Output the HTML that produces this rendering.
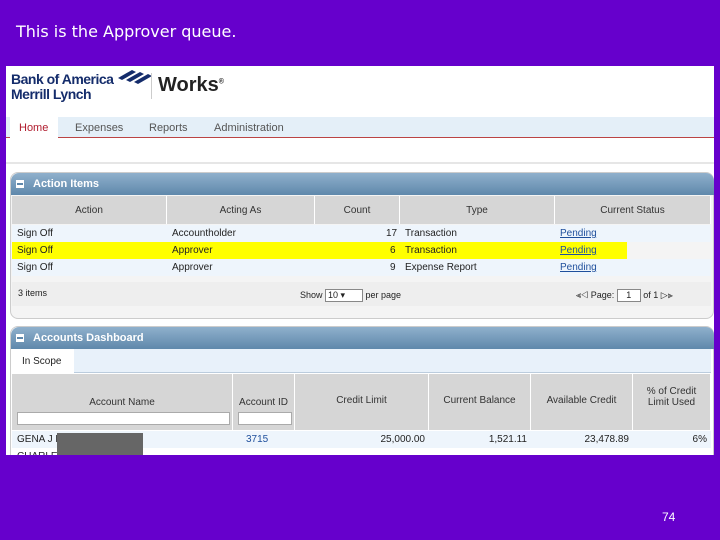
<!DOCTYPE html><html><head><style>
*{margin:0;padding:0;box-sizing:border-box}
body{width:720px;height:540px;background:#6600cc;position:relative;overflow:hidden;font-family:"Liberation Sans",sans-serif}
.a{position:absolute}
.t{font-size:11px;color:#222}
.hd{background:linear-gradient(#8fb0cc,#5f88ab);color:#fff;font-size:11px;font-weight:bold;border-radius:8px 8px 0 0}
.hc{background:#d6d6d6;border-right:1px solid #fff;font-size:10px;color:#333;display:flex;align-items:center;justify-content:center;text-align:center;position:absolute}
.lnk{color:#1f4f9c;text-decoration:underline}
</style></head><body>
<div class="a" style="left:16px;top:22px;color:#fff;font-size:16px;font-family:'DejaVu Sans',sans-serif">This is the Approver queue.</div>
<div class="a" style="left:6px;top:66px;width:708px;height:389px;background:#fff;overflow:hidden">
 <div class="a" style="left:5px;top:6px;font-weight:bold;font-size:14px;color:#142c6b;line-height:15px;letter-spacing:-.5px">Bank of America<br>Merrill Lynch</div>
 <svg class="a" style="left:106px;top:2px" width="42" height="18"><g fill="#142c6b"><path d="M6 10 L20 2 L24 4 L10 12Z"/><path d="M14 12 L28 4 L32 6 L18 14Z"/><path d="M22 14 L36 6 L40 8 L26 16Z"/></g></svg>
 <div class="a" style="left:145px;top:7px;width:1px;height:26px;background:#ccc"></div>
 <div class="a" style="left:152px;top:8px;font-size:20px;font-weight:bold;color:#222">Works<sup style="font-size:7px">®</sup></div>
 <div class="a" style="left:0;top:51px;width:708px;height:21px;background:#e4eff8;border-bottom:1px solid #b44"></div>
 <div class="a t" style="left:4px;top:51px;width:48px;height:21px;background:#fff;color:#b01c2e;padding:5px 0 0 9px">Home</div>
 <div class="a t" style="left:69px;top:56px;color:#555">Expenses</div>
 <div class="a t" style="left:143px;top:56px;color:#555">Reports</div>
 <div class="a t" style="left:208px;top:56px;color:#555">Administration</div>
 <div class="a" style="left:0;top:96px;width:708px;height:2px;background:#e6e6e6"></div>
 <div class="a" style="left:4px;top:106px;width:704px;height:147px;border:1px solid #ccc;border-radius:8px;background:#f4f4f4"></div>
 <div class="a hd" style="left:5px;top:107px;width:703px;height:22px;padding:5px 0 0 22px">Action Items</div>
 <div class="a" style="left:10px;top:114px;width:8px;height:8px;background:#fff"><div style="margin:3px 1px;height:2px;background:#5f88ab"></div></div>
 <div class="hc" style="left:6px;top:130px;width:155px;height:28px">Action</div>
 <div class="hc" style="left:161px;top:130px;width:148px;height:28px">Acting As</div>
 <div class="hc" style="left:309px;top:130px;width:85px;height:28px">Count</div>
 <div class="hc" style="left:394px;top:130px;width:155px;height:28px">Type</div>
 <div class="hc" style="left:549px;top:130px;width:156px;height:28px">Current Status</div>
 <div class="a" style="left:6px;top:159px;width:699px;height:17px;background:#eef5fc"></div>
 <div class="a" style="left:6px;top:176px;width:615px;height:17px;background:#ffff00"></div>
 <div class="a" style="left:6px;top:193px;width:699px;height:17px;background:#eef5fc"></div>
 <div class="a t" style="left:11px;top:162px;font-size:10px">Sign Off</div><div class="a t" style="left:166px;top:162px;font-size:10px">Accountholder</div><div class="a t" style="left:380px;top:162px;font-size:10px">17</div><div class="a t" style="left:399px;top:162px;font-size:10px">Transaction</div><div class="a t lnk" style="left:554px;top:162px;font-size:10px">Pending</div>
 <div class="a t" style="left:11px;top:179px;font-size:10px">Sign Off</div><div class="a t" style="left:166px;top:179px;font-size:10px">Approver</div><div class="a t" style="left:384px;top:179px;font-size:10px">6</div><div class="a t" style="left:399px;top:179px;font-size:10px">Transaction</div><div class="a t lnk" style="left:554px;top:179px;font-size:10px">Pending</div>
 <div class="a t" style="left:11px;top:196px;font-size:10px">Sign Off</div><div class="a t" style="left:166px;top:196px;font-size:10px">Approver</div><div class="a t" style="left:384px;top:196px;font-size:10px">9</div><div class="a t" style="left:399px;top:196px;font-size:10px">Expense Report</div><div class="a t lnk" style="left:554px;top:196px;font-size:10px">Pending</div>
 <div class="a" style="left:6px;top:216px;width:699px;height:24px;background:#eee"></div>
 <div class="a t" style="left:12px;top:222px;font-size:9px">3 items</div>
 <div class="a t" style="left:294px;top:223px;font-size:9px">Show <span style="display:inline-block;width:38px;height:13px;border:1px solid #888;background:#fff;vertical-align:middle;padding-left:2px">10 ▾</span> per page</div>
 <div class="a t" style="left:570px;top:223px;font-size:9px">⫷◁ Page: <span style="display:inline-block;width:24px;height:13px;border:1px solid #888;background:#fff;text-align:center">1</span> of 1 ▷⫸</div>
 <div class="a" style="left:4px;top:260px;width:704px;height:140px;border:1px solid #ccc;border-radius:8px;background:#fff"></div>
 <div class="a hd" style="left:5px;top:261px;width:703px;height:22px;padding:5px 0 0 22px">Accounts Dashboard</div>
 <div class="a" style="left:10px;top:268px;width:8px;height:8px;background:#fff"><div style="margin:3px 1px;height:2px;background:#5f88ab"></div></div>
 <div class="a" style="left:6px;top:283px;width:699px;height:24px;background:#e8f1fa;border-bottom:1px solid #bcd"></div>
 <div class="a t" style="left:6px;top:283px;width:62px;height:25px;background:#fff;font-size:10px;padding:7px 0 0 10px">In Scope</div>
 <div class="hc" style="left:6px;top:308px;width:221px;height:56px">Account Name</div>
 <div class="hc" style="left:227px;top:308px;width:62px;height:56px">Account ID</div>
 <div class="hc" style="left:289px;top:308px;width:134px;height:56px;align-items:flex-start;padding-top:21px">Credit Limit</div>
 <div class="hc" style="left:423px;top:308px;width:102px;height:56px;align-items:flex-start;padding-top:21px">Current Balance</div>
 <div class="hc" style="left:525px;top:308px;width:102px;height:56px;align-items:flex-start;padding-top:21px">Available Credit</div>
 <div class="hc" style="left:627px;top:308px;width:78px;height:56px;align-items:flex-start;padding-top:12px">% of Credit<br>Limit Used</div>
 <div class="a" style="left:11px;top:346px;width:213px;height:13px;background:#fff;border:1px solid #aaa"></div>
 <div class="a" style="left:232px;top:346px;width:54px;height:13px;background:#fff;border:1px solid #aaa"></div>
 <div class="a" style="left:6px;top:365px;width:699px;height:17px;background:#eef5fc"></div>
 <div class="a t" style="left:11px;top:368px;font-size:10px">GENA J M</div>
 <div class="a t" style="left:240px;top:368px;font-size:10px;color:#1f4f9c">3715</div>
 <div class="a t" style="left:360px;top:368px;font-size:10px;width:59px;text-align:right">25,000.00</div>
 <div class="a t" style="left:440px;top:368px;font-size:10px;width:81px;text-align:right">1,521.11</div>
 <div class="a t" style="left:540px;top:368px;font-size:10px;width:83px;text-align:right">23,478.89</div>
 <div class="a t" style="left:660px;top:368px;font-size:10px;width:41px;text-align:right">6%</div>
 <div class="a t" style="left:11px;top:385px;font-size:10px">CHARLE</div>
 <div class="a" style="left:51px;top:367px;width:86px;height:25px;background:#666"></div>
</div>
<div class="a" style="left:662px;top:510px;color:#fff;font-size:12px">74</div>
</body></html>
